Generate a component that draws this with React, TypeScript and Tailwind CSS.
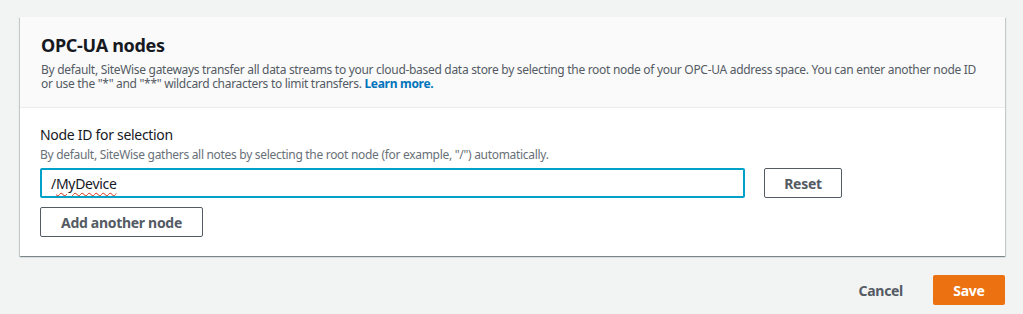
import React from "react";

export default function App() {
  return (
    <div
      className="w-full h-[314px] bg-[#f2f3f3] pt-[17px] pl-[20px] pr-[18px] tracking-[-0.3px]"
      style={{ fontFamily: '"Noto Sans", "Open Sans", Arial, sans-serif' }}
    >
      <div className="bg-white shadow-[0_1px_1px_0_rgba(0,28,36,0.3),1px_1px_1px_0_rgba(0,28,36,0.15),-1px_1px_1px_0_rgba(0,28,36,0.15)]">
        <div className="bg-[#fafafa] h-[91px] border-b border-[#eaeded] px-[21px] pt-[17px]">
          <h2 className="text-[18px] leading-[22px] font-bold text-[#16191f]">OPC-UA nodes</h2>
          <p className="mt-[7px] text-[12px] leading-[14px] text-[#545b64]">
            By default, SiteWise gateways transfer all data streams to your cloud-based data store by selecting the root node of your OPC-UA address space. You can enter another node ID or use the "*" and "**" wildcard characters to limit transfers.{" "}
            <span className="font-bold text-[#0073bb]">Learn more.</span>
          </p>
        </div>
        <div className="px-[20px] pt-[17px] pb-[19px]">
          <div className="text-[14px] leading-[20px] text-[#16191f]">Node ID for selection</div>
          <div className="mt-[2px] text-[12px] leading-[16px] text-[#687078]">
            By default, SiteWise gathers all notes by selecting the root node (for example, "/") automatically.
          </div>
          <div className="mt-[5px] flex items-center gap-[19px]">
            <div className="w-[705px] h-[30px] border-2 border-[#00a1c9] rounded-[2px] flex items-center pl-[9px] text-[14px] text-[#16191f]">
              <span>/</span>
              <span className="underline decoration-wavy decoration-[#d13212] decoration-1 underline-offset-[3px]">MyDevice</span>
            </div>
            <button className="w-[78px] h-[30px] border border-[#545b64] rounded-[2px] text-[14px] font-bold text-[#545b64] bg-white">
              Reset
            </button>
          </div>
          <button className="mt-[9px] w-[163px] h-[30px] border border-[#545b64] rounded-[2px] text-[14px] font-bold text-[#545b64] bg-white">
            Add another node
          </button>
        </div>
      </div>
      <div className="mt-[19px] flex justify-end items-center">
        <button className="text-[14px] font-bold text-[#545b64] mr-[30px]">Cancel</button>
        <button className="w-[72px] h-[30px] rounded-[2px] bg-[#ec7211] text-white text-[14px] font-bold">Save</button>
      </div>
    </div>
  );
}
